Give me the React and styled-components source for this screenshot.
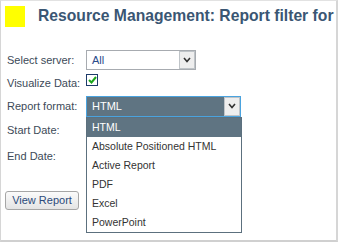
import React from "react";
import styled, { createGlobalStyle } from "styled-components";

const Global = createGlobalStyle`
  html, body { margin: 0; padding: 0; background: #ffffff; }
  body { font-family: "Liberation Sans", Arial, sans-serif; }
`;

const Frame = styled.div`
  box-sizing: border-box;
  width: 338px;
  height: 242px;
  border-top: 1px solid #e2e2e2;
  border-left: 1px solid #d6d6d6;
  border-right: 2px solid #d6d6d6;
  border-bottom: 2px solid #d0d0d0;
  background: #fff;
  overflow: hidden;
`;

const Header = styled.div`
  display: flex;
  align-items: center;
  height: 24px;
  padding: 3px 0 0 4px;
  gap: 13px;
`;

const Swatch = styled.div`
  width: 20px;
  height: 21px;
  background: #ffff00;
`;

const Title = styled.h1`
  margin: 0;
  font-family: "Liberation Sans", Arial, sans-serif;
  font-weight: bold;
  font-size: 15.7px;
  color: #3a5673;
  white-space: nowrap;
`;

const Form = styled.div`
  display: grid;
  grid-template-columns: 79px auto;
  padding: 21px 0 0 6px;
`;

const Label = styled.div`
  font-size: 11px;
  color: #3c4a58;
  height: ${(p) => p.h}px;
  line-height: ${(p) => p.h}px;
  white-space: nowrap;
`;

const Cell = styled.div`
  height: ${(p) => p.h}px;
  display: flex;
  align-items: ${(p) => (p.top ? "flex-start" : "center")};
`;

const SelectWrap = styled.div`
  position: relative;
`;

const SelectBox = styled.div`
  box-sizing: border-box;
  width: ${(p) => p.w}px;
  height: ${(p) => p.hh}px;
  display: flex;
  border: 1px solid ${(p) => (p.focus ? "#4aa3df" : "#a7abb0")};
  background: ${(p) => (p.focus ? "#5f7482" : "#fff")};
  color: ${(p) => (p.focus ? "#fff" : "#2a4b8a")};
  font-size: 11px;
`;

const SelectText = styled.div`
  flex: 1;
  padding-left: 5px;
  display: flex;
  align-items: center;
`;

const ArrowBtn = styled.div`
  box-sizing: border-box;
  width: 16px;
  height: 100%;
  background: #eeeeee;
  border: 1px solid #bfc4c8;
  display: flex;
  align-items: center;
  justify-content: center;
`;

const Check = styled.div`
  box-sizing: border-box;
  width: 12px;
  height: 12px;
  margin-top: 3px;
  border: 1px solid #1d3b6a;
  background: #fff;
  display: flex;
  align-items: center;
  justify-content: center;
`;

const List = styled.div`
  position: absolute;
  left: 0;
  top: 100%;
  box-sizing: border-box;
  width: 156px;
  border: 1px solid #5c707e;
  background: #fff;
  z-index: 2;
`;

const Option = styled.div`
  height: 19px;
  line-height: 19px;
  padding-left: 5px;
  font-size: 10.5px;
  color: ${(p) => (p.active ? "#fff" : "#333")};
  background: ${(p) => (p.active ? "#5f7482" : "#fff")};
  white-space: nowrap;
`;

const ButtonRow = styled.div`
  padding: 21px 0 0 4px;
`;

const Button = styled.button`
  box-sizing: border-box;
  width: 74px;
  height: 19px;
  padding: 0;
  font-family: "Liberation Sans", Arial, sans-serif;
  font-size: 11px;
  color: #2b4a7a;
  background: linear-gradient(#fbfbfb, #e4e4e4);
  border: 1px solid #a6a6a6;
  border-radius: 3px;
`;

const Chevron = ({ color = "#333" }) => (
  <svg width="8" height="6" viewBox="0 0 8 6">
    <path d="M1 1 L4 4.5 L7 1" fill="none" stroke={color} strokeWidth="1.6" />
  </svg>
);

const options = [
  "HTML",
  "Absolute Positioned HTML",
  "Active Report",
  "PDF",
  "Excel",
  "PowerPoint",
];

export default function App() {
  return (
    <>
      <Global />
      <Frame>
        <Header>
          <Swatch />
          <Title>Resource Management: Report filter for</Title>
        </Header>
        <Form>
          <Label h={22}>Select server:</Label>
          <Cell h={22}>
            <SelectBox w={110} hh={20}>
              <SelectText>All</SelectText>
              <ArrowBtn>
                <Chevron />
              </ArrowBtn>
            </SelectBox>
          </Cell>
          <Label h={24}>Visualize Data:</Label>
          <Cell h={24} top>
            <Check>
              <svg width="9" height="8" viewBox="0 0 9 8">
                <path d="M1 4 L3.5 6.5 L8 1" fill="none" stroke="#1aa51a" strokeWidth="2" />
              </svg>
            </Check>
          </Cell>
          <Label h={22}>Report format:</Label>
          <Cell h={22}>
            <SelectWrap>
              <SelectBox w={155} hh={21} focus>
                <SelectText>HTML</SelectText>
                <ArrowBtn>
                  <Chevron />
                </ArrowBtn>
              </SelectBox>
              <List>
                {options.map((o, i) => (
                  <Option key={o} active={i === 0}>
                    {o}
                  </Option>
                ))}
              </List>
            </SelectWrap>
          </Cell>
          <Label h={26}>Start Date:</Label>
          <Cell h={26} />
          <Label h={26}>End Date:</Label>
          <Cell h={26} />
        </Form>
        <ButtonRow>
          <Button>View Report</Button>
        </ButtonRow>
      </Frame>
    </>
  );
}
